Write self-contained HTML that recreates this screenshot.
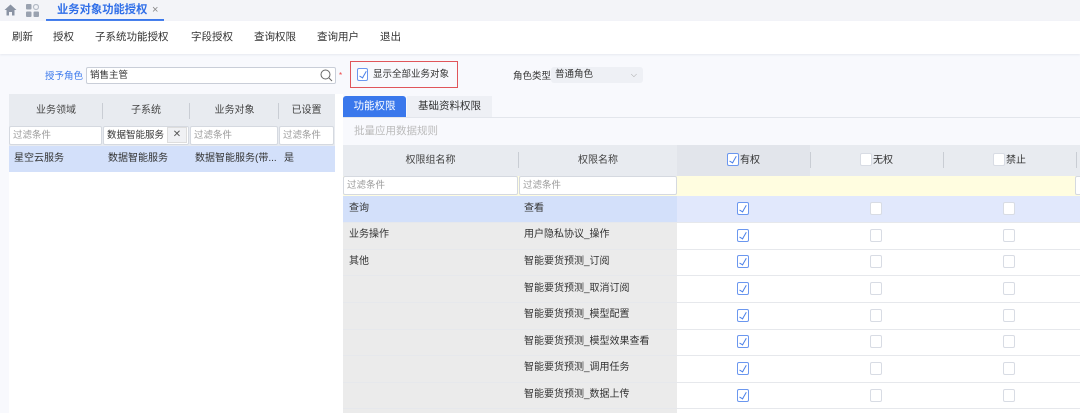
<!DOCTYPE html>
<html><head><meta charset="utf-8"><style>
*{margin:0;padding:0;box-sizing:border-box}
body{width:1080px;height:413px;overflow:hidden;background:#f8f9fd;font-family:"Liberation Sans","Noto Sans CJK SC",sans-serif;font-size:10px;line-height:12px;color:#333;position:relative;white-space:nowrap}
.a{position:absolute}
.cb{position:absolute;width:12px;height:13px;border:1px solid #d8dce4;border-radius:2px;background:#fff}
.cb.on{border-color:#6b97ef}
.cb.on::after{content:"";position:absolute;left:3px;top:1px;width:3px;height:7px;border-right:1px solid #4a7fe8;border-bottom:1px solid #4a7fe8;transform:rotate(30deg)}
.inp{position:absolute;height:19px;background:#fff;border:1px solid #d5d9e0;border-radius:2px;color:#999;padding-left:3px;line-height:17px;font-size:9.5px}
.hd{position:absolute;text-align:center;color:#444}
.sep{position:absolute;width:1px;height:16px;background:#c9cdd4}
</style></head><body>
<div class="a" style="left:0;top:0;width:1080px;height:21px;background:#f3f4f8"></div>
<svg class="a" style="left:4px;top:4px" width="13" height="12" viewBox="0 0 13 12"><path d="M6.5 0.5L0.5 6H2.5V11.5H5V8H8V11.5H10.5V6H12.5Z" fill="#8a93a3"/></svg>
<svg class="a" style="left:26px;top:4px" width="13" height="13" viewBox="0 0 13 13"><rect x="0" y="0" width="5.5" height="5.5" rx="1" fill="#9aa2b0"/><circle cx="10" cy="3" r="2.5" fill="none" stroke="#b5bcc7" stroke-width="1.2"/><rect x="0" y="7.5" width="5.5" height="5.5" rx="1" fill="#9aa2b0"/><rect x="7.5" y="7.5" width="5.5" height="5.5" rx="1" fill="#9aa2b0"/></svg>
<div class="a" style="left:57px;top:4px;font-size:11.3px;line-height:13px;color:#2f6ee8;font-weight:bold">业务对象功能授权</div>
<div class="a" style="left:152px;top:4px;font-size:11px;color:#888">×</div>
<div class="a" style="left:46px;top:19px;width:118px;height:2px;background:#3a78ec"></div>
<div class="a" style="left:0;top:21px;width:1080px;height:33px;background:#fff;box-shadow:0 1px 2px #e6e9f0"></div>
<div class="a" style="left:12px;top:31px;font-size:10.5px;color:#333">
<span class="a" style="left:0">刷新</span><span class="a" style="left:41px">授权</span><span class="a" style="left:83px">子系统功能授权</span><span class="a" style="left:179px">字段授权</span><span class="a" style="left:242px">查询权限</span><span class="a" style="left:305px">查询用户</span><span class="a" style="left:368px">退出</span></div>
<div class="a" style="left:45px;top:71px;color:#3a78ec;font-size:9.5px">授予角色</div>
<div class="a" style="left:86px;top:67px;width:250px;height:17px;background:#fff;border:1px solid #c9ced8;border-radius:2px;padding-left:3px;line-height:15px;font-size:9.5px">销售主管</div>
<svg class="a" style="left:320px;top:69px" width="13" height="13" viewBox="0 0 13 13"><circle cx="5.5" cy="5.5" r="4.5" fill="none" stroke="#666" stroke-width="1"/><path d="M9 9L12 12" stroke="#666"/></svg>
<div class="a" style="left:339px;top:70px;color:#e44;font-size:8px">*</div>
<div class="a" style="left:350px;top:61px;width:108px;height:27px;border:1px solid #e0555a"></div>
<div class="cb on" style="left:357px;top:68px;width:11px;height:13px"></div>
<div class="a" style="left:373px;top:69px;font-size:9.5px">显示全部业务对象</div>
<div class="a" style="left:513px;top:71px;font-size:9.5px">角色类型</div>
<div class="a" style="left:551px;top:67px;width:92px;height:16px;background:#eef0f5;border-radius:3px;padding-left:4px;line-height:16px;font-size:9.5px">普通角色<span style="position:absolute;right:6px;color:#999;font-size:8px">⌵</span></div>
<div class="a" style="left:9px;top:94px;width:334px;height:319px;background:#fff"></div>
<div class="a" style="left:9px;top:94px;width:326px;height:52px;background:#e8ebf0"></div>
<div class="hd" style="left:9px;top:105px;width:94px">业务领域</div>
<div class="sep" style="left:102px;top:103px"></div>
<div class="hd" style="left:103px;top:105px;width:86px">子系统</div>
<div class="sep" style="left:189px;top:103px"></div>
<div class="hd" style="left:190px;top:105px;width:89px">业务对象</div>
<div class="sep" style="left:278px;top:103px"></div>
<div class="hd" style="left:279px;top:105px;width:55px">已设置</div>
<div class="inp" style="left:9px;top:126px;width:93px">过滤条件</div>
<div class="inp" style="left:103px;top:126px;width:86px;color:#333">数据智能服务</div>
<div class="a" style="left:167px;top:127px;width:20px;height:16px;background:#f0f1f4;border:1px solid #ddd;text-align:center;line-height:14px;color:#555">✕</div>
<div class="inp" style="left:190px;top:126px;width:88px">过滤条件</div>
<div class="inp" style="left:279px;top:126px;width:55px">过滤条件</div>
<div class="a" style="left:9px;top:146px;width:326px;height:26px;background:#d3e0fa"></div>
<div class="a" style="left:14px;top:153px">星空云服务</div>
<div class="a" style="left:108px;top:153px">数据智能服务</div>
<div class="a" style="left:195px;top:153px">数据智能服务(带...</div>
<div class="a" style="left:284px;top:153px">是</div>
<div class="a" style="left:343px;top:96px;width:63px;height:21px;background:#3a78ec;color:#fff;border-radius:3px 3px 0 0;text-align:center;line-height:21px;font-size:10.5px">功能权限</div>
<div class="a" style="left:407px;top:96px;width:85px;height:21px;background:#eef0f5;text-align:center;line-height:21px;font-size:10.5px">基础资料权限</div>
<div class="a" style="left:343px;top:117px;width:737px;height:1px;background:#e3e6ec"></div>
<div class="a" style="left:354px;top:125px;color:#bbb;font-size:10.5px">批量应用数据规则</div>
<div class="a" style="left:343px;top:145px;width:737px;height:31px;background:#e8ebf0"></div>
<div class="a" style="left:677px;top:145px;width:133px;height:31px;background:#e2e5eb"></div>
<div class="hd" style="left:343px;top:155px;width:175px">权限组名称</div>
<div class="sep" style="left:518px;top:152px"></div>
<div class="hd" style="left:519px;top:155px;width:158px">权限名称</div>
<div class="sep" style="left:810px;top:152px"></div>
<div class="sep" style="left:943px;top:152px"></div>
<div class="sep" style="left:1076px;top:152px"></div>
<div class="cb on" style="left:727px;top:153px"></div><div class="a" style="left:740px;top:155px">有权</div>
<div class="cb" style="left:860px;top:153px"></div><div class="a" style="left:873px;top:155px">无权</div>
<div class="cb" style="left:993px;top:153px"></div><div class="a" style="left:1006px;top:155px">禁止</div>
<div class="a" style="left:343px;top:176px;width:737px;height:20px;background:#fffde0"></div>
<div class="inp" style="left:343px;top:176px;width:175px">过滤条件</div>
<div class="inp" style="left:519px;top:176px;width:158px">过滤条件</div>
<div class="inp" style="left:1075px;top:176px;width:10px"></div>
<div class="a" style="left:343px;top:196px;width:737px;height:217px;background:#fff"></div>
<div class="a" style="left:343px;top:196px;width:334px;height:217px;background:#ebebeb"></div>
<div class="a" style="left:343px;top:196px;width:334px;height:26px;background:#d3e0fa"></div>
<div class="a" style="left:677px;top:196px;width:403px;height:26px;background:#e1e8fc"></div>
<div class="a" style="left:349px;top:203px">查询</div><div class="a" style="left:524px;top:203px">查看</div>
<div class="a" style="left:349px;top:229px">业务操作</div><div class="a" style="left:524px;top:229px">用户隐私协议_操作</div>
<div class="a" style="left:349px;top:256px">其他</div><div class="a" style="left:524px;top:256px">智能要货预测_订阅</div>
<div class="a" style="left:524px;top:283px">智能要货预测_取消订阅</div>
<div class="a" style="left:524px;top:309px">智能要货预测_模型配置</div>
<div class="a" style="left:524px;top:336px">智能要货预测_模型效果查看</div>
<div class="a" style="left:524px;top:362px">智能要货预测_调用任务</div>
<div class="a" style="left:524px;top:389px">智能要货预测_数据上传</div>
<div class="a" style="left:343px;top:222px;width:737px;height:1px;background:#e6e8ec"></div>
<div class="a" style="left:343px;top:249px;width:737px;height:1px;background:#e6e8ec"></div>
<div class="a" style="left:343px;top:275px;width:737px;height:1px;background:#e6e8ec"></div>
<div class="a" style="left:343px;top:302px;width:737px;height:1px;background:#e6e8ec"></div>
<div class="a" style="left:343px;top:329px;width:737px;height:1px;background:#e6e8ec"></div>
<div class="a" style="left:343px;top:355px;width:737px;height:1px;background:#e6e8ec"></div>
<div class="a" style="left:343px;top:382px;width:737px;height:1px;background:#e6e8ec"></div>
<div class="a" style="left:343px;top:408px;width:737px;height:1px;background:#e6e8ec"></div>
<div class="cb on" style="left:737px;top:202px"></div><div class="cb" style="left:870px;top:202px"></div><div class="cb" style="left:1003px;top:202px"></div>
<div class="cb on" style="left:737px;top:229px"></div><div class="cb" style="left:870px;top:229px"></div><div class="cb" style="left:1003px;top:229px"></div>
<div class="cb on" style="left:737px;top:255px"></div><div class="cb" style="left:870px;top:255px"></div><div class="cb" style="left:1003px;top:255px"></div>
<div class="cb on" style="left:737px;top:282px"></div><div class="cb" style="left:870px;top:282px"></div><div class="cb" style="left:1003px;top:282px"></div>
<div class="cb on" style="left:737px;top:309px"></div><div class="cb" style="left:870px;top:309px"></div><div class="cb" style="left:1003px;top:309px"></div>
<div class="cb on" style="left:737px;top:335px"></div><div class="cb" style="left:870px;top:335px"></div><div class="cb" style="left:1003px;top:335px"></div>
<div class="cb on" style="left:737px;top:362px"></div><div class="cb" style="left:870px;top:362px"></div><div class="cb" style="left:1003px;top:362px"></div>
<div class="cb on" style="left:737px;top:389px"></div><div class="cb" style="left:870px;top:389px"></div><div class="cb" style="left:1003px;top:389px"></div>
</body></html>
